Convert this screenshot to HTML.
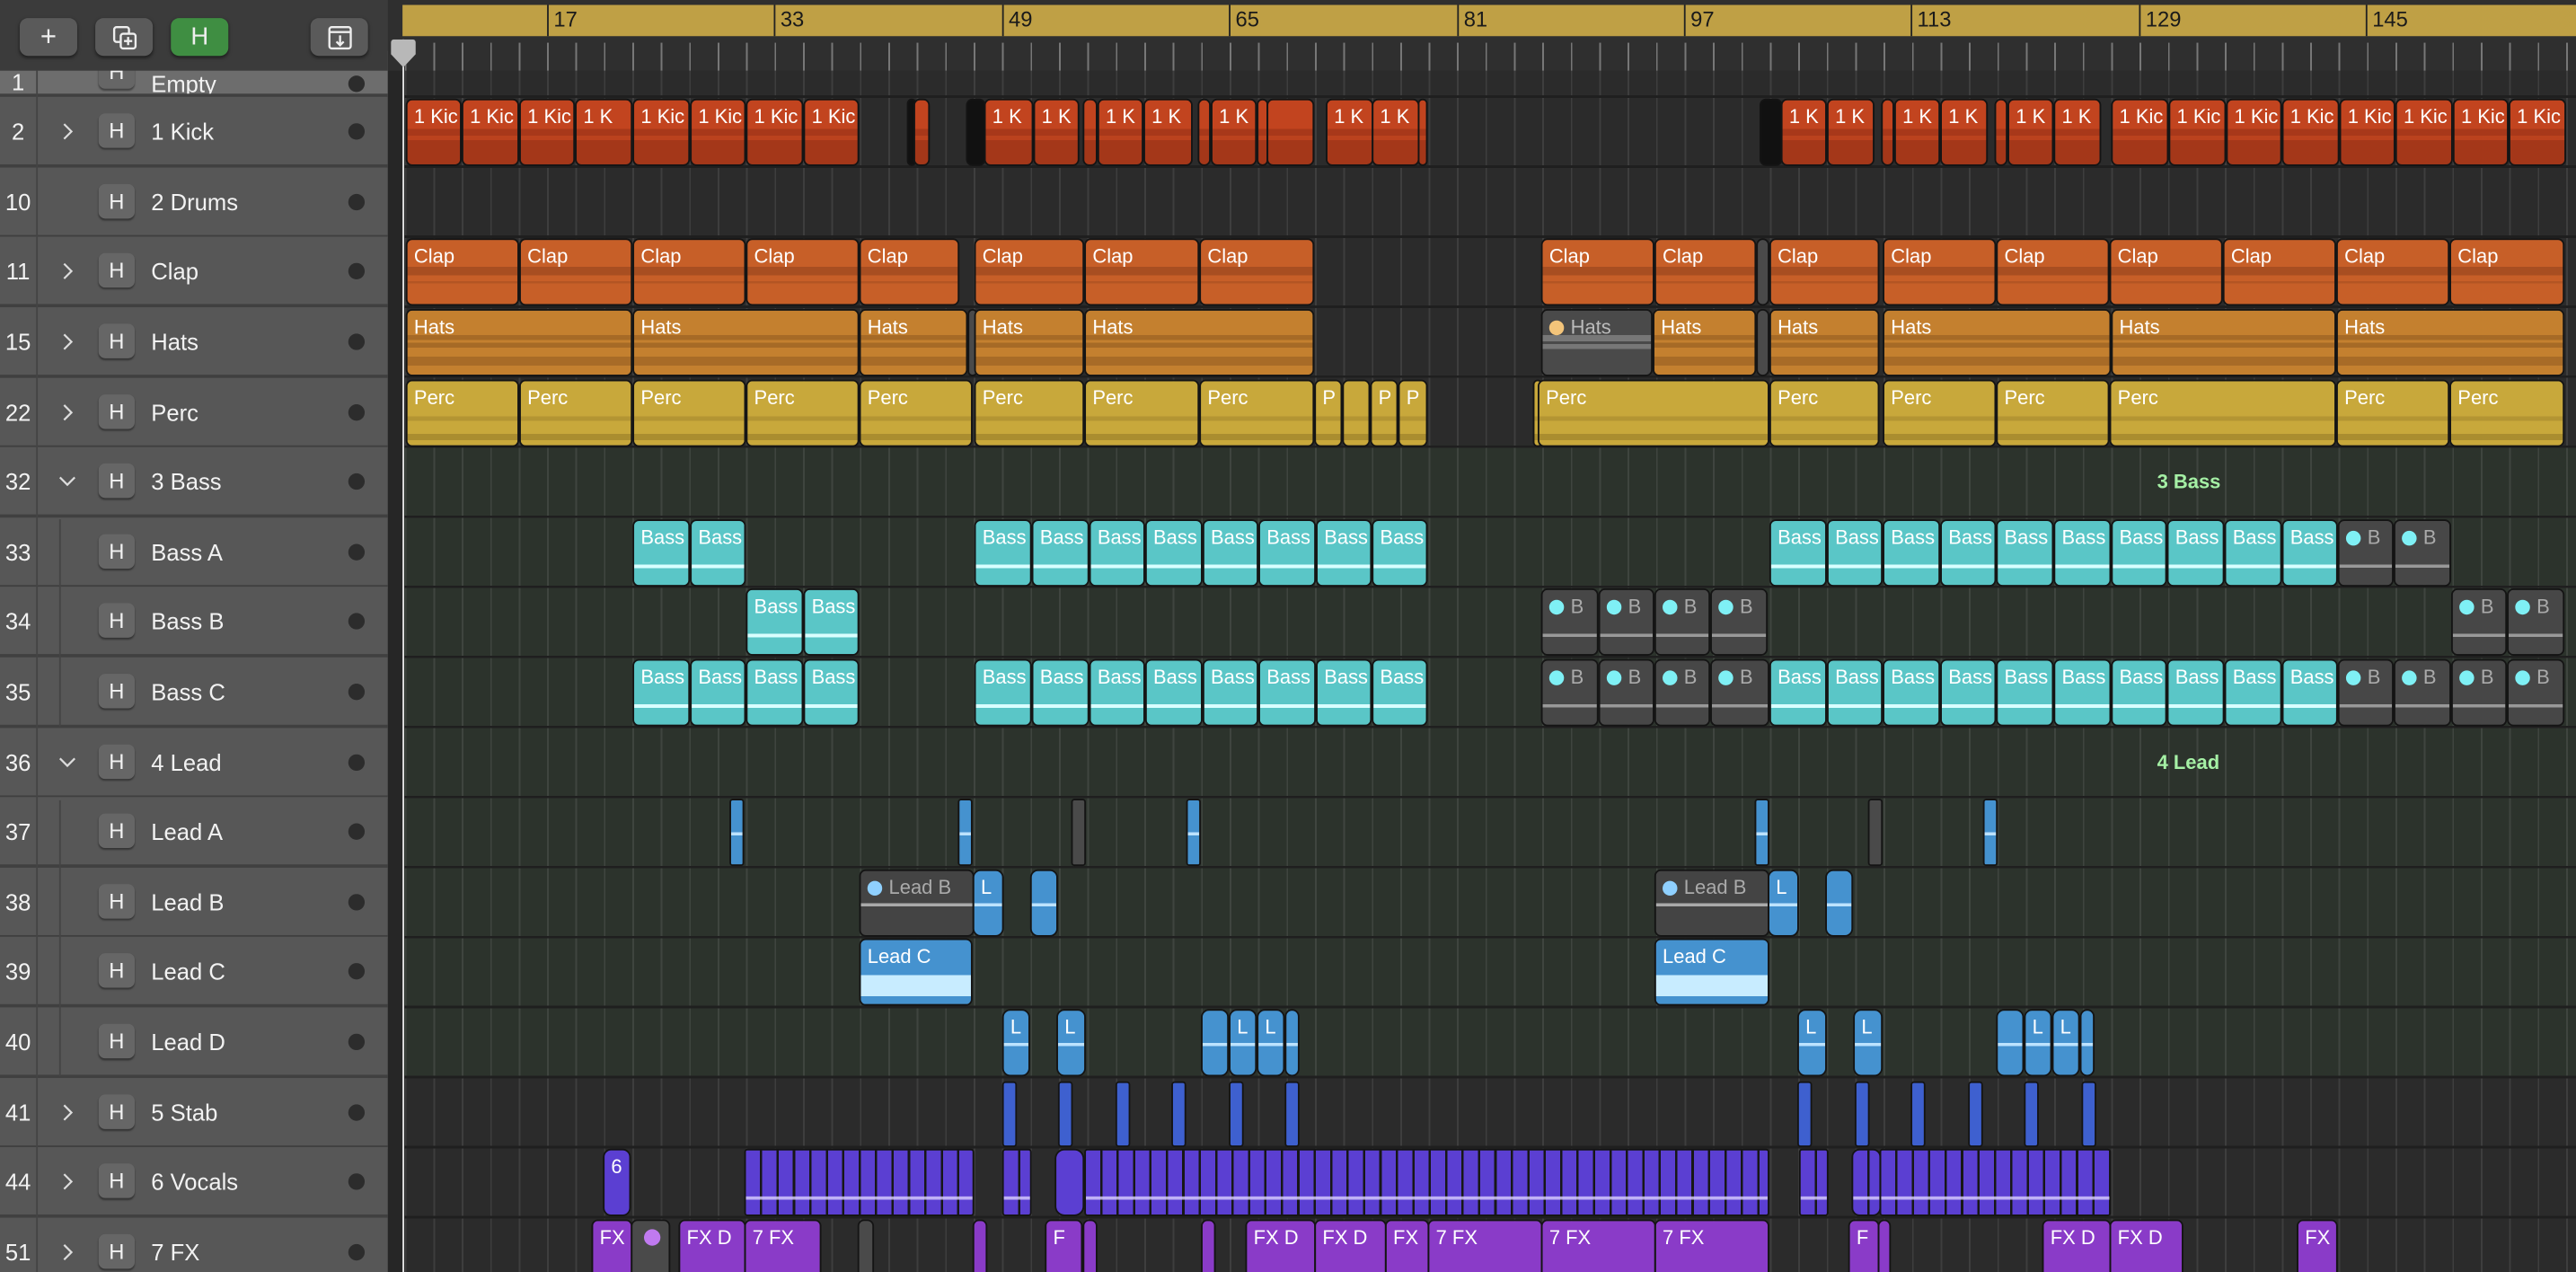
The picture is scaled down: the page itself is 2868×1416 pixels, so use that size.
<!DOCTYPE html>
<html><head><meta charset="utf-8"><style>
*{margin:0;padding:0;box-sizing:border-box}
html,body{width:2868px;height:1416px;overflow:hidden;background:#2b2b2b}
#w{position:absolute;left:0;top:0;width:1568px;height:774px;transform:scale(1.82908,1.82946);transform-origin:0 0;font-family:"Liberation Sans",sans-serif;overflow:hidden;background:#2b2b2b}
.abs{position:absolute}
#lp{position:absolute;left:0;top:0;width:236px;height:774px;background:#4e4e4e}
#tb{position:absolute;left:0;top:0;width:236px;height:43px;background:#3b3b3b;z-index:3}
.btn{position:absolute;top:11px;width:35px;height:23px;border-radius:5px;background:#5a5a5a;box-shadow:0 1px 2px rgba(0,0,0,.5);color:#eee;text-align:center;font-size:17px;line-height:23px}
.tr{position:absolute;left:0;width:236px;height:43px;background:#575757;border-bottom:2px solid #404040;color:#f2f2f2;font-size:14px}
.tr .n{position:absolute;left:0;width:22px;text-align:center;top:13px}
.tr .ch{position:absolute;left:36px;top:15px;width:10px;height:12px}
.tr .hb{position:absolute;left:60px;top:10px;width:22px;height:21px;border-radius:4px;background:#666;box-shadow:0 1px 1px rgba(0,0,0,.4);text-align:center;line-height:21px;font-size:13px}
.tr .nm{position:absolute;left:92px;top:13px}
.tr .dt{position:absolute;left:212px;top:16px;width:10px;height:10px;border-radius:50%;background:#2c2c2c}
.row{position:absolute;left:0;width:1568px;height:43px}
.c{position:absolute;top:1px;height:41px;border:1px solid #141414;border-radius:4px;color:#fff;font-size:12px;padding:3px 0 0 4px;overflow:hidden;white-space:nowrap;font-style:normal;line-height:14px}
.k{background:linear-gradient(#c2441f 0 45%,#a8381a 45% 55%,#bb421e 55% 62%,#a43719 62% 100%)}
.bk{background:#111}
.cl{background:linear-gradient(#c75f28 0 42%,#a84e21 42% 55%,#c75f28 55% 64%,#b35523 64% 68%,#c75f28 68% 100%)}
.h{background:linear-gradient(#c4802f 0 38%,#a66a26 38% 46%,#c4802f 46% 50%,#a66a26 50% 58%,#c4802f 58% 72%,#a86b27 72% 86%,#c4802f 86% 100%)}
.p{background:linear-gradient(#c8a83b 0 55%,#b39533 55% 62%,#c8a83b 62% 82%,#aa8d2f 82% 92%,#c8a83b 92% 100%)}
.b{background:linear-gradient(#5ac6c7 0 68%,#d8ffff 68% 74%,#5ac6c7 74% 100%)}
.g{background:linear-gradient(#474747 0 68%,#999 68% 73%,#474747 73% 100%);color:#aaa}
.g::before{content:"";display:inline-block;width:9px;height:9px;border-radius:50%;background:#7ff0f5;margin-right:4px;vertical-align:-1px}
.gh{background:linear-gradient(#4a4a4a 0 38%,#777 38% 48%,#4a4a4a 48% 52%,#777 52% 60%,#4a4a4a 60% 100%);color:#bbb}
.gh::before{content:"";display:inline-block;width:9px;height:9px;border-radius:50%;background:#f3c47a;margin-right:4px;vertical-align:-1px}
.gl{background:linear-gradient(#444 0 50%,#aaa 50% 55%,#444 55% 100%);color:#aaa}
.gl::before{content:"";display:inline-block;width:9px;height:9px;border-radius:50%;background:#8fd0ff;margin-right:4px;vertical-align:-1px}
.la{background:linear-gradient(#4592cf 0 50%,#bde3ff 50% 55%,#4592cf 55% 100%);border-radius:5px}
.lc{background:linear-gradient(#4592cf 0 55%,#c8ecff 55% 88%,#4592cf 88% 100%)}
.st{background:#3e60cf;top:2px;height:40px;border-radius:2px}
.v{background:repeating-linear-gradient(90deg,#5b3fd2 0 8.6px,#171717 8.6px 10px);border-radius:2px}
.v::after{content:"";position:absolute;left:0;right:0;top:28px;height:2px;background:#d9d0ff;opacity:.8}
.fx{background:linear-gradient(#8a3bc8 0 82%,#d8b8f5 82% 86%,#8a3bc8 86% 100%)}
.gf{background:#4a4a4a}
.lbl{position:absolute;color:#a5f0a5;font-weight:bold;font-size:12px}
</style></head><body><div id="w">

<div class="abs" style="left:245px;top:43px;width:1323px;height:228px;background:#2b2b2b"></div>
<div class="abs" style="left:245px;top:271px;width:1323px;height:384px;background:#2c332c"></div>
<div class="abs" style="left:245px;top:655px;width:1323px;height:119px;background:#2b2b2b"></div>
<div class="abs" style="left:245px;top:43px;width:1323px;height:731px;background:repeating-linear-gradient(90deg,transparent 0 1.45px,rgba(255,255,255,.09) 1.45px 2.45px,transparent 2.45px 17.31px)"></div>
<div class="abs" style="left:245px;top:58px;width:1323px;height:716px;background:repeating-linear-gradient(180deg,#1f1f1f 0 1.5px,transparent 1.5px 42.62px)"></div>
<div class="abs" style="left:236px;top:0;width:9px;height:774px;background:#262626"></div>

<div class="abs" style="left:236px;top:0;width:1332px;height:43px;background:#2f2f2f"></div>
<div class="abs" style="left:245px;top:3px;width:1323px;height:19px;background:#bfa045"></div>
<div class="abs" style="left:245px;top:26px;width:1323px;height:17px;background:repeating-linear-gradient(90deg,transparent 0 1.45px,#777 1.45px 2.45px,transparent 2.45px 17.31px)"></div>
<div class="abs" style="left:333px;top:3px;width:1px;height:19px;background:#222"></div><div class="abs" style="left:337px;top:4px;font-size:13px;color:#1a1a1a">17</div>
<div class="abs" style="left:471px;top:3px;width:1px;height:19px;background:#222"></div><div class="abs" style="left:475px;top:4px;font-size:13px;color:#1a1a1a">33</div>
<div class="abs" style="left:610px;top:3px;width:1px;height:19px;background:#222"></div><div class="abs" style="left:614px;top:4px;font-size:13px;color:#1a1a1a">49</div>
<div class="abs" style="left:748px;top:3px;width:1px;height:19px;background:#222"></div><div class="abs" style="left:752px;top:4px;font-size:13px;color:#1a1a1a">65</div>
<div class="abs" style="left:887px;top:3px;width:1px;height:19px;background:#222"></div><div class="abs" style="left:891px;top:4px;font-size:13px;color:#1a1a1a">81</div>
<div class="abs" style="left:1025px;top:3px;width:1px;height:19px;background:#222"></div><div class="abs" style="left:1029px;top:4px;font-size:13px;color:#1a1a1a">97</div>
<div class="abs" style="left:1163px;top:3px;width:1px;height:19px;background:#222"></div><div class="abs" style="left:1167px;top:4px;font-size:13px;color:#1a1a1a">113</div>
<div class="abs" style="left:1302px;top:3px;width:1px;height:19px;background:#222"></div><div class="abs" style="left:1306px;top:4px;font-size:13px;color:#1a1a1a">129</div>
<div class="abs" style="left:1440px;top:3px;width:1px;height:19px;background:#222"></div><div class="abs" style="left:1444px;top:4px;font-size:13px;color:#1a1a1a">145</div>

<div id="lp"></div>
<div id="tb">
<div class="btn" style="left:12px">+</div>
<div class="btn" style="left:58px"><svg width="16" height="16" viewBox="0 0 16 16" style="margin-top:4px" fill="none" stroke="#eee" stroke-width="1.3"><rect x="1.5" y="1.5" width="9" height="9" rx="1.5"/><rect x="5.5" y="5.5" width="9" height="9" rx="1.5" fill="#5a5a5a"/><path d="M10 7.5v5M7.5 10h5"/></svg></div>
<div class="btn" style="left:104px;background:#3f8e42;font-size:15px">H</div>
<div class="btn" style="left:189px"><svg width="16" height="16" viewBox="0 0 16 16" style="margin-top:4px" fill="none" stroke="#eee" stroke-width="1.3"><rect x="1.5" y="1.5" width="13" height="13" rx="1.5"/><path d="M1.5 4.5h13M8 6.5v6M5.8 10.3 8 12.5l2.2-2.2"/></svg></div>
</div>
<div class="tr" style="top:31px;height:28px;background:#6d6d6d;overflow:hidden"><span class="n" style="top:11px">1</span><span class="hb" style="top:2px">H</span><span class="nm" style="top:12px">Empty</span><span class="dt" style="top:15px"></span></div>
<div class="tr" style="top:59px"><span class="n">2</span><svg class="ch" viewBox="0 0 10 12"><path d="M3 1.5 7.5 6 3 10.5" fill="none" stroke="#ddd" stroke-width="1.2"/></svg><span class="hb">H</span><span class="nm">1 Kick</span><span class="dt"></span></div>
<div class="tr" style="top:101.6px"><span class="n">10</span><span class="hb">H</span><span class="nm">2 Drums</span><span class="dt"></span></div>
<div class="tr" style="top:144.2px"><span class="n">11</span><svg class="ch" viewBox="0 0 10 12"><path d="M3 1.5 7.5 6 3 10.5" fill="none" stroke="#ddd" stroke-width="1.2"/></svg><span class="hb">H</span><span class="nm">Clap</span><span class="dt"></span></div>
<div class="tr" style="top:186.9px"><span class="n">15</span><svg class="ch" viewBox="0 0 10 12"><path d="M3 1.5 7.5 6 3 10.5" fill="none" stroke="#ddd" stroke-width="1.2"/></svg><span class="hb">H</span><span class="nm">Hats</span><span class="dt"></span></div>
<div class="tr" style="top:229.5px"><span class="n">22</span><svg class="ch" viewBox="0 0 10 12"><path d="M3 1.5 7.5 6 3 10.5" fill="none" stroke="#ddd" stroke-width="1.2"/></svg><span class="hb">H</span><span class="nm">Perc</span><span class="dt"></span></div>
<div class="tr" style="top:272.1px"><span class="n">32</span><svg class="ch" viewBox="0 0 10 12"><path d="M0.5 3.5 5 8 9.5 3.5" fill="none" stroke="#ddd" stroke-width="1.2"/></svg><span class="hb">H</span><span class="nm">3 Bass</span><span class="dt"></span></div>
<div class="tr" style="top:314.7px"><span class="n">33</span><span class="hb">H</span><span class="nm">Bass A</span><span class="dt"></span></div>
<div class="tr" style="top:357.3px"><span class="n">34</span><span class="hb">H</span><span class="nm">Bass B</span><span class="dt"></span></div>
<div class="tr" style="top:399.9px"><span class="n">35</span><span class="hb">H</span><span class="nm">Bass C</span><span class="dt"></span></div>
<div class="tr" style="top:442.6px"><span class="n">36</span><svg class="ch" viewBox="0 0 10 12"><path d="M0.5 3.5 5 8 9.5 3.5" fill="none" stroke="#ddd" stroke-width="1.2"/></svg><span class="hb">H</span><span class="nm">4 Lead</span><span class="dt"></span></div>
<div class="tr" style="top:485.2px"><span class="n">37</span><span class="hb">H</span><span class="nm">Lead A</span><span class="dt"></span></div>
<div class="tr" style="top:527.8px"><span class="n">38</span><span class="hb">H</span><span class="nm">Lead B</span><span class="dt"></span></div>
<div class="tr" style="top:570.4px"><span class="n">39</span><span class="hb">H</span><span class="nm">Lead C</span><span class="dt"></span></div>
<div class="tr" style="top:613px"><span class="n">40</span><span class="hb">H</span><span class="nm">Lead D</span><span class="dt"></span></div>
<div class="tr" style="top:655.6px"><span class="n">41</span><svg class="ch" viewBox="0 0 10 12"><path d="M3 1.5 7.5 6 3 10.5" fill="none" stroke="#ddd" stroke-width="1.2"/></svg><span class="hb">H</span><span class="nm">5 Stab</span><span class="dt"></span></div>
<div class="tr" style="top:698.3px"><span class="n">44</span><svg class="ch" viewBox="0 0 10 12"><path d="M3 1.5 7.5 6 3 10.5" fill="none" stroke="#ddd" stroke-width="1.2"/></svg><span class="hb">H</span><span class="nm">6 Vocals</span><span class="dt"></span></div>
<div class="tr" style="top:740.9px"><span class="n">51</span><svg class="ch" viewBox="0 0 10 12"><path d="M3 1.5 7.5 6 3 10.5" fill="none" stroke="#ddd" stroke-width="1.2"/></svg><span class="hb">H</span><span class="nm">7 FX</span><span class="dt"></span></div>
<div class="abs" style="left:22px;top:43px;width:1px;height:731px;background:#444"></div>
<div class="abs" style="left:36px;top:316px;width:1px;height:126px;background:#444"></div>
<div class="abs" style="left:36px;top:487px;width:1px;height:168px;background:#444"></div>

<div class="row" style="top:59px">
<i class="c k" style="left:247px;width:34px">1 Kic</i><i class="c k" style="left:281px;width:35px">1 Kic</i><i class="c k" style="left:316px;width:34px">1 Kic</i><i class="c k" style="left:350px;width:35px">1 K</i><i class="c k" style="left:385px;width:35px">1 Kic</i><i class="c k" style="left:420px;width:34px">1 Kic</i><i class="c k" style="left:454px;width:35px">1 Kic</i><i class="c k" style="left:489px;width:34px">1 Kic</i>
<i class="c bk" style="left:552px;width:5px"></i><i class="c k" style="left:556px;width:10px"></i>
<i class="c bk" style="left:588px;width:12px"></i><i class="c k" style="left:599px;width:30px">1 K</i><i class="c k" style="left:629px;width:28px">1 K</i><i class="c k" style="left:659px;width:9px"></i><i class="c k" style="left:668px;width:28px">1 K</i><i class="c k" style="left:696px;width:30px">1 K</i><i class="c k" style="left:729px;width:8px"></i><i class="c k" style="left:737px;width:28px">1 K</i><i class="c k" style="left:765px;width:7px"></i><i class="c k" style="left:771px;width:29px"></i><i class="c k" style="left:807px;width:29px">1 K</i><i class="c k" style="left:835px;width:29px">1 K</i><i class="c k" style="left:863px;width:6px"></i>
<i class="c bk" style="left:1071px;width:14px"></i><i class="c k" style="left:1084px;width:28px">1 K</i><i class="c k" style="left:1112px;width:29px">1 K</i><i class="c k" style="left:1145px;width:8px"></i><i class="c k" style="left:1153px;width:28px">1 K</i><i class="c k" style="left:1181px;width:29px">1 K</i><i class="c k" style="left:1214px;width:8px"></i><i class="c k" style="left:1222px;width:28px">1 K</i><i class="c k" style="left:1250px;width:29px">1 K</i>
<i class="c k" style="left:1285px;width:35px">1 Kic</i><i class="c k" style="left:1320px;width:35px">1 Kic</i><i class="c k" style="left:1355px;width:34px">1 Kic</i><i class="c k" style="left:1389px;width:35px">1 Kic</i><i class="c k" style="left:1424px;width:34px">1 Kic</i><i class="c k" style="left:1458px;width:35px">1 Kic</i><i class="c k" style="left:1493px;width:34px">1 Kic</i><i class="c k" style="left:1527px;width:35px">1 Kic</i>
</div>

<div class="row" style="top:144.2px">
<i class="c cl" style="left:247px;width:69px">Clap</i><i class="c cl" style="left:316px;width:69px">Clap</i><i class="c cl" style="left:385px;width:69px">Clap</i><i class="c cl" style="left:454px;width:69px">Clap</i><i class="c cl" style="left:523px;width:61px">Clap</i>
<i class="c cl" style="left:593px;width:67px">Clap</i><i class="c cl" style="left:660px;width:70px">Clap</i><i class="c cl" style="left:730px;width:70px">Clap</i>
<i class="c cl" style="left:938px;width:69px">Clap</i><i class="c cl" style="left:1007px;width:62px">Clap</i><i class="c gf" style="left:1069px;width:8px"></i><i class="c cl" style="left:1077px;width:67px">Clap</i><i class="c cl" style="left:1146px;width:69px">Clap</i><i class="c cl" style="left:1215px;width:69px">Clap</i><i class="c cl" style="left:1284px;width:69px">Clap</i><i class="c cl" style="left:1353px;width:69px">Clap</i><i class="c cl" style="left:1422px;width:69px">Clap</i><i class="c cl" style="left:1491px;width:70px">Clap</i>
</div>

<div class="row" style="top:186.9px">
<i class="c h" style="left:247px;width:138px">Hats</i><i class="c h" style="left:385px;width:138px">Hats</i><i class="c h" style="left:523px;width:66px">Hats</i><i class="c gf" style="left:589px;width:4px"></i><i class="c h" style="left:593px;width:67px">Hats</i><i class="c h" style="left:660px;width:140px">Hats</i>
<i class="c gh" style="left:938px;width:68px">Hats</i><i class="c h" style="left:1006px;width:63px">Hats</i><i class="c gf" style="left:1069px;width:8px"></i><i class="c h" style="left:1077px;width:67px">Hats</i><i class="c h" style="left:1146px;width:139px">Hats</i><i class="c h" style="left:1285px;width:137px">Hats</i><i class="c h" style="left:1422px;width:139px">Hats</i>
</div>

<div class="row" style="top:229.5px">
<i class="c p" style="left:247px;width:69px">Perc</i><i class="c p" style="left:316px;width:69px">Perc</i><i class="c p" style="left:385px;width:69px">Perc</i><i class="c p" style="left:454px;width:69px">Perc</i><i class="c p" style="left:523px;width:69px">Perc</i><i class="c p" style="left:593px;width:67px">Perc</i><i class="c p" style="left:660px;width:70px">Perc</i><i class="c p" style="left:730px;width:70px">Perc</i><i class="c p" style="left:800px;width:17px">P</i><i class="c p" style="left:817px;width:17px"></i><i class="c p" style="left:834px;width:17px">P</i><i class="c p" style="left:851px;width:18px">P</i>
<i class="c p" style="left:933px;width:4px"></i><i class="c p" style="left:936px;width:141px">Perc</i><i class="c p" style="left:1077px;width:67px">Perc</i><i class="c p" style="left:1146px;width:69px">Perc</i><i class="c p" style="left:1215px;width:69px">Perc</i><i class="c p" style="left:1284px;width:138px">Perc</i><i class="c p" style="left:1422px;width:69px">Perc</i><i class="c p" style="left:1491px;width:70px">Perc</i>
</div>

<div class="lbl" style="left:1313px;top:286px">3 Bass</div>
<div class="lbl" style="left:1313px;top:457px">4 Lead</div>

<div class="row" style="top:314.7px">
<i class="c b" style="left:385px;width:35px">Bass</i><i class="c b" style="left:420px;width:34px">Bass</i>
<i class="c b" style="left:593px;width:35px">Bass</i><i class="c b" style="left:628px;width:35px">Bass</i><i class="c b" style="left:663px;width:34px">Bass</i><i class="c b" style="left:697px;width:35px">Bass</i><i class="c b" style="left:732px;width:34px">Bass</i><i class="c b" style="left:766px;width:35px">Bass</i><i class="c b" style="left:801px;width:34px">Bass</i><i class="c b" style="left:835px;width:34px">Bass</i>
<i class="c b" style="left:1077px;width:35px">Bass</i><i class="c b" style="left:1112px;width:34px">Bass</i><i class="c b" style="left:1146px;width:35px">Bass</i><i class="c b" style="left:1181px;width:34px">Bass</i><i class="c b" style="left:1215px;width:35px">Bass</i><i class="c b" style="left:1250px;width:35px">Bass</i><i class="c b" style="left:1285px;width:34px">Bass</i><i class="c b" style="left:1319px;width:35px">Bass</i><i class="c b" style="left:1354px;width:35px">Bass</i><i class="c b" style="left:1389px;width:34px">Bass</i><i class="c g" style="left:1423px;width:34px">B</i><i class="c g" style="left:1457px;width:35px">B</i>
</div>
<div class="row" style="top:357.3px">
<i class="c b" style="left:454px;width:35px">Bass</i><i class="c b" style="left:489px;width:34px">Bass</i>
<i class="c g" style="left:938px;width:35px">B</i><i class="c g" style="left:973px;width:34px">B</i><i class="c g" style="left:1007px;width:34px">B</i><i class="c g" style="left:1041px;width:35px">B</i>
<i class="c g" style="left:1492px;width:34px">B</i><i class="c g" style="left:1526px;width:35px">B</i>
</div>
<div class="row" style="top:399.9px">
<i class="c b" style="left:385px;width:35px">Bass</i><i class="c b" style="left:420px;width:34px">Bass</i><i class="c b" style="left:454px;width:35px">Bass</i><i class="c b" style="left:489px;width:34px">Bass</i>
<i class="c b" style="left:593px;width:35px">Bass</i><i class="c b" style="left:628px;width:35px">Bass</i><i class="c b" style="left:663px;width:34px">Bass</i><i class="c b" style="left:697px;width:35px">Bass</i><i class="c b" style="left:732px;width:34px">Bass</i><i class="c b" style="left:766px;width:35px">Bass</i><i class="c b" style="left:801px;width:34px">Bass</i><i class="c b" style="left:835px;width:34px">Bass</i>
<i class="c g" style="left:938px;width:35px">B</i><i class="c g" style="left:973px;width:34px">B</i><i class="c g" style="left:1007px;width:34px">B</i><i class="c g" style="left:1041px;width:36px">B</i>
<i class="c b" style="left:1077px;width:35px">Bass</i><i class="c b" style="left:1112px;width:34px">Bass</i><i class="c b" style="left:1146px;width:35px">Bass</i><i class="c b" style="left:1181px;width:34px">Bass</i><i class="c b" style="left:1215px;width:35px">Bass</i><i class="c b" style="left:1250px;width:35px">Bass</i><i class="c b" style="left:1285px;width:34px">Bass</i><i class="c b" style="left:1319px;width:35px">Bass</i><i class="c b" style="left:1354px;width:35px">Bass</i><i class="c b" style="left:1389px;width:34px">Bass</i><i class="c g" style="left:1423px;width:34px">B</i><i class="c g" style="left:1457px;width:35px">B</i><i class="c g" style="left:1492px;width:34px">B</i><i class="c g" style="left:1526px;width:35px">B</i>
</div>

<div class="row" style="top:485.2px">
<i class="c la" style="left:444px;width:9px;border-radius:2px"></i><i class="c la" style="left:583px;width:9px;border-radius:2px"></i><i class="c gf" style="left:652px;width:9px;border-radius:2px"></i><i class="c la" style="left:722px;width:9px;border-radius:2px"></i>
<i class="c la" style="left:1068px;width:9px;border-radius:2px"></i><i class="c gf" style="left:1137px;width:9px;border-radius:2px"></i><i class="c la" style="left:1207px;width:9px;border-radius:2px"></i>
</div>
<div class="row" style="top:527.8px">
<i class="c gl" style="left:523px;width:70px">Lead B</i><i class="c la" style="left:592px;width:19px">L</i><i class="c la" style="left:627px;width:17px"></i>
<i class="c gl" style="left:1007px;width:70px">Lead B</i><i class="c la" style="left:1076px;width:19px">L</i><i class="c la" style="left:1111px;width:17px"></i>
</div>
<div class="row" style="top:570.4px">
<i class="c lc" style="left:523px;width:69px">Lead C</i><i class="c lc" style="left:1007px;width:70px">Lead C</i>
</div>
<div class="row" style="top:613px">
<i class="c la" style="left:610px;width:17px">L</i><i class="c la" style="left:643px;width:18px">L</i><i class="c la" style="left:731px;width:17px"></i><i class="c la" style="left:748px;width:17px">L</i><i class="c la" style="left:765px;width:17px">L</i><i class="c la" style="left:782px;width:9px"></i>
<i class="c la" style="left:1094px;width:18px">L</i><i class="c la" style="left:1128px;width:18px">L</i><i class="c la" style="left:1215px;width:17px"></i><i class="c la" style="left:1232px;width:17px">L</i><i class="c la" style="left:1249px;width:17px">L</i><i class="c la" style="left:1266px;width:9px"></i>
</div>
<div class="row" style="top:655.6px">
<i class="c st" style="left:610px;width:9px"></i><i class="c st" style="left:644px;width:9px"></i><i class="c st" style="left:679px;width:9px"></i><i class="c st" style="left:713px;width:9px"></i><i class="c st" style="left:748px;width:9px"></i><i class="c st" style="left:782px;width:9px"></i>
<i class="c st" style="left:1094px;width:9px"></i><i class="c st" style="left:1129px;width:9px"></i><i class="c st" style="left:1163px;width:9px"></i><i class="c st" style="left:1198px;width:9px"></i><i class="c st" style="left:1232px;width:9px"></i><i class="c st" style="left:1267px;width:9px"></i>
</div>
<div class="row" style="top:698.3px">
<i class="c" style="left:367px;width:17px;background:#5b3fd2;border-radius:5px">6</i>
<i class="c v" style="left:453px;width:140px"></i><i class="c v" style="left:610px;width:18px"></i><i class="c" style="left:642px;width:18px;background:#5b3fd2;border-radius:6px"></i><i class="c v" style="left:660px;width:417px"></i><i class="c v" style="left:1095px;width:18px"></i><i class="c v" style="left:1127px;width:18px;border-radius:5px"></i><i class="c v" style="left:1144px;width:141px"></i>
</div>
<div class="row" style="top:740.9px">
<i class="c fx" style="left:360px;width:25px">FX</i><i class="c gf" style="left:384px;width:24px"><span style="display:inline-block;width:10px;height:10px;border-radius:50%;background:#c07af0;margin:2px 0 0 3px"></span></i><i class="c fx" style="left:413px;width:41px">FX D</i><i class="c fx" style="left:453px;width:47px">7 FX</i><i class="c gf" style="left:522px;width:10px"></i><i class="c fx" style="left:592px;width:9px"></i><i class="c fx" style="left:636px;width:23px">F</i><i class="c fx" style="left:659px;width:9px"></i><i class="c fx" style="left:731px;width:9px"></i>
<i class="c fx" style="left:758px;width:43px">FX D</i><i class="c fx" style="left:800px;width:44px">FX D</i><i class="c fx" style="left:843px;width:27px">FX</i><i class="c fx" style="left:869px;width:70px">7 FX</i><i class="c fx" style="left:938px;width:70px">7 FX</i><i class="c fx" style="left:1007px;width:70px">7 FX</i>
<i class="c fx" style="left:1125px;width:19px">F</i><i class="c fx" style="left:1143px;width:8px"></i><i class="c fx" style="left:1243px;width:42px">FX D</i><i class="c fx" style="left:1284px;width:45px">FX D</i><i class="c fx" style="left:1398px;width:25px">FX</i>
</div>

<div class="abs" style="left:245px;top:24px;width:1px;height:750px;background:#e8e8e8"></div>
<svg class="abs" style="left:236px;top:24px" width="19" height="18" viewBox="0 0 19 18"><path d="M2 2Q2 0 4 0H15Q17 0 17 2V9L9.5 17L2 9Z" fill="#b8b8b8"/></svg>
</div></body></html>
